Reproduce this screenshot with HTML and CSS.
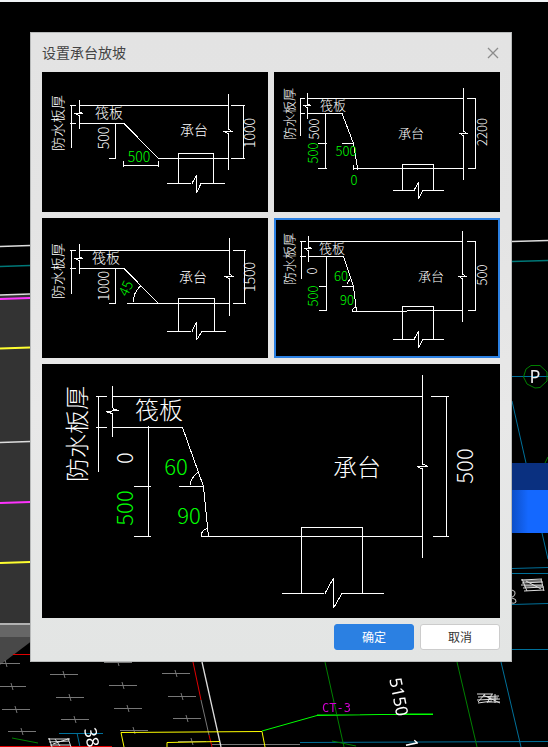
FILE: index.html
```html
<!DOCTYPE html>
<html lang="zh-CN">
<head>
<meta charset="utf-8">
<meta name="viewport" content="width=device-width, initial-scale=1">
<title>设置承台放坡</title>
<link rel="stylesheet" href="styles.css">
</head>
<body>
<svg class="scene" viewBox="0 0 548 747" preserveAspectRatio="xMinYMin slice" aria-hidden="true">
  <defs>
    <linearGradient id="beam" x1="0" x2="1"><stop offset="0" stop-color="#0d4fc8"/><stop offset=".45" stop-color="#1468ff"/></linearGradient>
    <path id="cross" d="M-14 .5H14M-1 -3L1 4"/>
  </defs>
  <rect width="548" height="2" fill="#f0f3f6"/>
  <!-- left slab -->
  <rect y="295" width="40" height="330" fill="#333"/>
  <rect y="625" width="40" height="12" fill="#666"/>
  <path d="M0 637H37L0 665Z" fill="#484848"/>
  <g stroke-width="2">
    <path stroke="#ddd" stroke-width="1.500" d="M0 246.500L30 245.500M0 295L30 294M0 442.500L30 441.500M0 624H30M512 241.500L548 240.500"/>
    <path stroke="#007878" stroke-width="1.500" d="M0 266.500L30 265.500M512 261.500L548 260.500"/>
    <path stroke="#f3f" d="M0 299L30 298M0 503L30 502"/>
    <path stroke="#ffff30" d="M0 348.500L30 347.500M0 563L30 562"/>
  </g>
  <!-- right beam and axes -->
  <g fill="none" stroke="#00709a">
    <path d="M512 376.500H548M512 401L526 463M542 533L548 559M512 568.500L548 567.500M512 573.500H548M512 604.500L548 603.500M512 649.500H548M501 662L521 747M300 742.500L548 741.500M59 733.500H103M77 733L80 747"/>
  </g>
  <path fill="none" stroke="#008000" d="M531 365.500L540 365.500L547 372V381L540 387.500L535 388L527 384L523.500 377L526 369ZM545 463L548 457M325 662L344 747M457 662L477 747M12 738L38 743M332 741L356 746"/>
  <text class="axis" x="535" y="383">P</text>
  <rect x="512" y="463" width="36" height="27" fill="#0a3080"/>
  <rect x="512" y="490" width="36" height="43" fill="url(#beam)"/>
  <!-- column hatch -->
  <g stroke="#777">
    <use href="#cross" x="6" y="663"/><use href="#cross" x="64" y="674"/><use href="#cross" x="118" y="662"/>
    <use href="#cross" x="12" y="686"/><use href="#cross" x="70" y="697"/><use href="#cross" x="123" y="685"/>
    <use href="#cross" x="176" y="673"/><use href="#cross" x="16" y="709"/><use href="#cross" x="75" y="719"/>
    <use href="#cross" x="128" y="708"/><use href="#cross" x="182" y="696"/><use href="#cross" x="22" y="731"/>
    <use href="#cross" x="134" y="730"/><use href="#cross" x="187" y="718"/><use href="#cross" x="192" y="741"/>
    <path d="M201 700L209 735M212 744.500H300"/>
  </g>
  <path stroke="#e00000" d="M13 654.500H30M193 662L201 700M209 735L212 747M0 746.500H112"/>
  <path stroke="#ddd" stroke-width="1.300" d="M202 662L221 747"/>
  <path fill="none" stroke="#ff0" d="M124 747L121 732.500L262 731.500L265 747M167 747V742.500L220 741.500"/>
  <path fill="none" stroke="#0f0" d="M262 731L317 715.500L380 714.500H433"/>
  <path stroke="#008000" d="M317 714.500H360M400 713.500H433"/>
  <g class="tangle">
    <path d="M521 580L542 579M522 583L543 582M521 585H543M523 588L544 587M524 591L544 590M522 579L527 591M541 579L544 591M526 581L541 589M524 586H542M523 581H541"/>
    <path d="M477 694H493M478 697L499 696M477 700L500 699M478 703L492 701M485 694L478 702M492 694L487 703M495 694V703M483 695L500 703M488 698H498M488 702H500"/>
    <path d="M48 739H70M49 742L69 741M50 745H70M49 738L52 747M68 738L71 747M55 739L60 746M53 744L68 739"/>
  </g>
  <path fill="none" stroke="#ccc" d="M512 590Q516 591 515 594Q514 597 512 597M512 598Q517 599 516 602Q514 604 512 603"/>
  <text class="mark" transform="translate(322 712)">CT-3</text>
  <text class="level" transform="translate(393 698) rotate(79)" text-anchor="middle">5150</text>
  <text class="level" transform="translate(405 740) rotate(79)">1</text>
  <text class="level" transform="translate(84 729) rotate(79)">38</text>
</svg>

<main class="dialog" role="dialog" aria-labelledby="dialog-title">
  <header class="dialog-head">
    <h1 id="dialog-title">设置承台放坡</h1>
    <button class="close" type="button" aria-label="关闭">
      <svg viewBox="0 0 12 12" width="12" height="12"><path d="M1 1L11 11M11 1L1 11"/></svg>
    </button>
  </header>

  <div class="options">
    <button class="tile" type="button" aria-pressed="false">
      <svg class="drawing" viewBox="0 0 226 140">
        <path class="line" d="M37 33.500H187M189 33.500H203M201.500 33V86M189 86.500H203M186.500 22V57L190 59.500H182L186.500 62V98M28 33.500H34M28 51.500H34M29.500 33V76M37.500 28V40L41 41.500H33L37.500 44V57M37 51.500H82M116 86.500H187M73.500 51V86.500H67M81.500 89V95M81 93.500H117M116.500 89V95M136.500 111V81.500H171.500V111M125 111.500H149M159 111.500H183M154.500 103V121"/>
        <path class="slope" d="M82 51.500L116.500 86.500M150 111.500L154.500 103M154.500 121L159 111.500"/>
        <g class="label">
          <text transform="translate(15 51) rotate(-90)">防水板厚</text>
          <text x="67" y="40">筏板</text>
          <text x="152" y="57">承台</text>
          <text transform="translate(61 66) rotate(-90)">500</text>
          <text transform="translate(207 61) rotate(-90)">1000</text>
          <text class="edit" x="97" y="84">500</text>
        </g>
      </svg>
    </button>

    <button class="tile" type="button" aria-pressed="false">
      <svg class="drawing" viewBox="0 0 226 140">
        <path class="line" d="M33 26.500H190M193 26.500H201.500V96.500H194M189.500 16V59L193 61.500H186L189.500 64V108M31 26.500H26.500V64M26 41.500H31M33.500 21V32L37 33.500H30L33.500 36V47M33 41.500H68M68 71.500H80M79.500 93V98M83.500 93V98M79 96.500H190M51.500 41V96M44 71.500H53M44 96.500H53M128.500 118V92.500H159.500V118M119 118.500H140M149 118.500H170M144.500 110V127"/>
        <path class="slope" d="M68 41.500L79.500 71.500L83.500 96.500M140 118.500L144.500 110M144.500 127L149 118.500"/>
        <g class="label small">
          <text transform="translate(14 42) rotate(-90)">防水板厚</text>
          <text x="59" y="32">筏板</text>
          <text x="137" y="60">承台</text>
          <text transform="translate(39 57) rotate(-90)">500</text>
          <text transform="translate(207 60) rotate(-90)">2200</text>
          <text class="edit" transform="translate(38 81) rotate(-90)">500</text>
          <text class="edit" x="72" y="78">500</text>
          <text class="edit" x="80" y="107">0</text>
        </g>
      </svg>
    </button>

    <button class="tile" type="button" aria-pressed="false">
      <svg class="drawing" viewBox="0 0 226 140">
        <path class="line" d="M37 32.500H188M191 32.500H204M202.500 32V85M191 85.500H204M187.500 20V56L191 58.500H183L187.500 61V98M28 32.500H34M28 50.500H34M29.500 32V76M37.500 26V39L41 40.500H33L37.500 43V56M37 50.500H82M85 85.500H188M73.500 50V85.500H67M136.500 113V80.500H172.500V113M125 113.500H149M160 113.500H184M154.500 104V122"/>
        <path class="slope" d="M82 50.500L116.500 85.500M98.500 68Q91 75 91.500 84M150 113.500L154.500 104M154.500 122L160 113.500"/>
        <g class="label">
          <text transform="translate(15 53) rotate(-90)">防水板厚</text>
          <text x="64" y="39">筏板</text>
          <text x="151" y="58">承台</text>
          <text transform="translate(61 68) rotate(-90)">1000</text>
          <text transform="translate(207 59) rotate(-90)">1500</text>
          <text class="edit" transform="translate(83 70) rotate(-65)">45</text>
        </g>
      </svg>
    </button>

    <button class="tile" type="button" aria-pressed="true">
      <svg class="drawing" viewBox="0 0 226 140">
        <path class="line" d="M34 23.500H189M193 23.500H201.500V92.500H194M188.500 13V56L192 58.500H185L188.500 61V104M26 23.500H32M26 38.500H32M27.500 23V61M34.500 18V29L38 30.500H31L34.500 33V44M34 38.500H70M68 68.500H80M52.500 38V92M45 68.500H53M45 92.500H53M78 93.500H133M133 92.500H189M128.500 121V88.500H159.500V121M119 121.500H140M149 121.500H170M144.500 113V130"/>
        <path class="slope" d="M69.500 38.500L79.500 68.500L82.500 93M76 61L73 66M78 93Q79 89 82 89.500M140 121.500L144.500 113M144.500 130L149 121.500"/>
        <g class="label small">
          <text transform="translate(14 41) rotate(-90)">防水板厚</text>
          <text x="58" y="29">筏板</text>
          <text x="157" y="57">承台</text>
          <text transform="translate(37 53) rotate(-90)">0</text>
          <text transform="translate(207 57) rotate(-90)">500</text>
          <text class="edit" transform="translate(38 78) rotate(-90)">500</text>
          <text class="edit" x="67" y="57">60</text>
          <text class="edit" x="73" y="81">90</text>
        </g>
      </svg>
    </button>

    <figure class="preview">
      <svg class="drawing" viewBox="0 0 458 254" role="img" aria-label="承台放坡预览">
        <path class="line" d="M70 32.500H381M389 32.500H407M404.500 32V172M391 172.500H407M380.500 11V100M380.500 105V194M54 32.500H65M54 63.500H65M56.500 32V108M70.500 22V43M70.500 51V73M70 63.500H141M137 122.500H162M159 172.500H381M106.500 62V172M92 122.500H109M92 172.500H109M259.500 229V163.500H320.500V229M240 229.500H282M300 229.500H342M291.500 214V244"/>
        <path class="slope" d="M140.500 63.500L161.500 122.500L166.500 172.500M156 108Q148 115 148.500 121M159 172Q160 165 165.500 164.500M283 229.500L291.500 214M291.500 244L300 229.500M70.500 43L72 45.500L77 46.500L64 47.500L70 49.500V51M380.500 100L386 102.500H375L380.500 105"/>
        <g class="label large">
          <text transform="translate(33 70) rotate(-90)">防水板厚</text>
          <text x="117" y="44">筏板</text>
          <text x="315" y="101">承台</text>
          <g class="value">
            <text transform="translate(81 94) rotate(-90)">0</text>
            <text transform="translate(421 102) rotate(-90)">500</text>
            <text class="edit" transform="translate(81 144) rotate(-90)">500</text>
            <text class="edit" x="134" y="101">60</text>
            <text class="edit" x="147" y="150">90</text>
          </g>
        </g>
      </svg>
    </figure>
  </div>

  <footer class="actions">
    <button class="btn primary" type="button">确定</button>
    <button class="btn" type="button">取消</button>
  </footer>
</main>
</body>
</html>
```
FILE: styles.css
```css
* {
  box-sizing: border-box;
}

body {
  margin: 0;
  min-height: 100vh;
  padding: 32px 36px 32px 30px;
  background: #000;
  font-family: "Noto Sans CJK SC", sans-serif;
  overflow-x: hidden;
}

.scene {
  position: fixed;
  inset: 0;
  width: 100%;
  height: 100%;
  z-index: -1;
}

.axis {
  fill: #eee;
  font: 18px "Noto Sans", sans-serif;
  text-anchor: middle;
}

.level {
  fill: #fff;
  font: 17px "Noto Sans", sans-serif;
}

.mark {
  fill: #d000d0;
  font: 12px "DejaVu Sans Mono", monospace;
}

.tangle {
  fill: none;
  stroke: #ddd;
}

.dialog {
  padding: 0 11px 11px;
  border: 1px solid #b8baba;
  background: linear-gradient(#e3e3e3, #e4e4e4 30%, #e8e8e8 60%, #e3e5e4);
}

.dialog-head {
  display: flex;
  align-items: center;
  justify-content: space-between;
  height: 39px;
}

.dialog-head h1 {
  margin: 0;
  padding-bottom: 2px;
  color: #444;
  font-size: 14px;
  font-weight: 400;
  line-height: 18px;
}

.close {
  display: grid;
  padding: 1px;
  border: 0;
  background: none;
}

.close path {
  stroke: #8c8c8c;
  stroke-width: 1.3;
}

.options {
  display: grid;
  grid-template-columns: 1fr 1fr;
  gap: 6px;
}

.tile {
  padding: 0;
  border: 0;
  background: #000;
}

.tile[aria-pressed="true"] {
  outline: 2px solid #2b80e2;
  outline-offset: -2px;
}

.preview {
  grid-column: 1 / -1;
  margin: 0;
  background: #000;
}

.drawing {
  display: block;
  width: 100%;
  height: auto;
}

.line,
.slope {
  fill: none;
  stroke: #fff;
  shape-rendering: crispEdges;
}

.label {
  fill: #fff;
  font-family: "Noto Sans CJK SC", sans-serif;
  font-size: 14px;
  font-weight: 300;
  text-anchor: middle;
  dominant-baseline: central;
}

.small {
  font-size: 13px;
}

.large {
  font-size: 24px;
}

.value {
  font-size: 22px;
}

.edit {
  fill: #0f0;
}

.actions {
  display: flex;
  justify-content: flex-end;
  gap: 6px;
  margin-top: 6px;
}

.btn {
  width: 80px;
  height: 26px;
  padding: 0;
  border: 1px solid #ccc;
  border-radius: 3px;
  background: #fff;
  color: #333;
  font-family: inherit;
  font-size: 12px;
  line-height: 24px;
}

.primary {
  border-color: #2b80e2;
  background: #2b80e2;
  color: #fff;
}
```
